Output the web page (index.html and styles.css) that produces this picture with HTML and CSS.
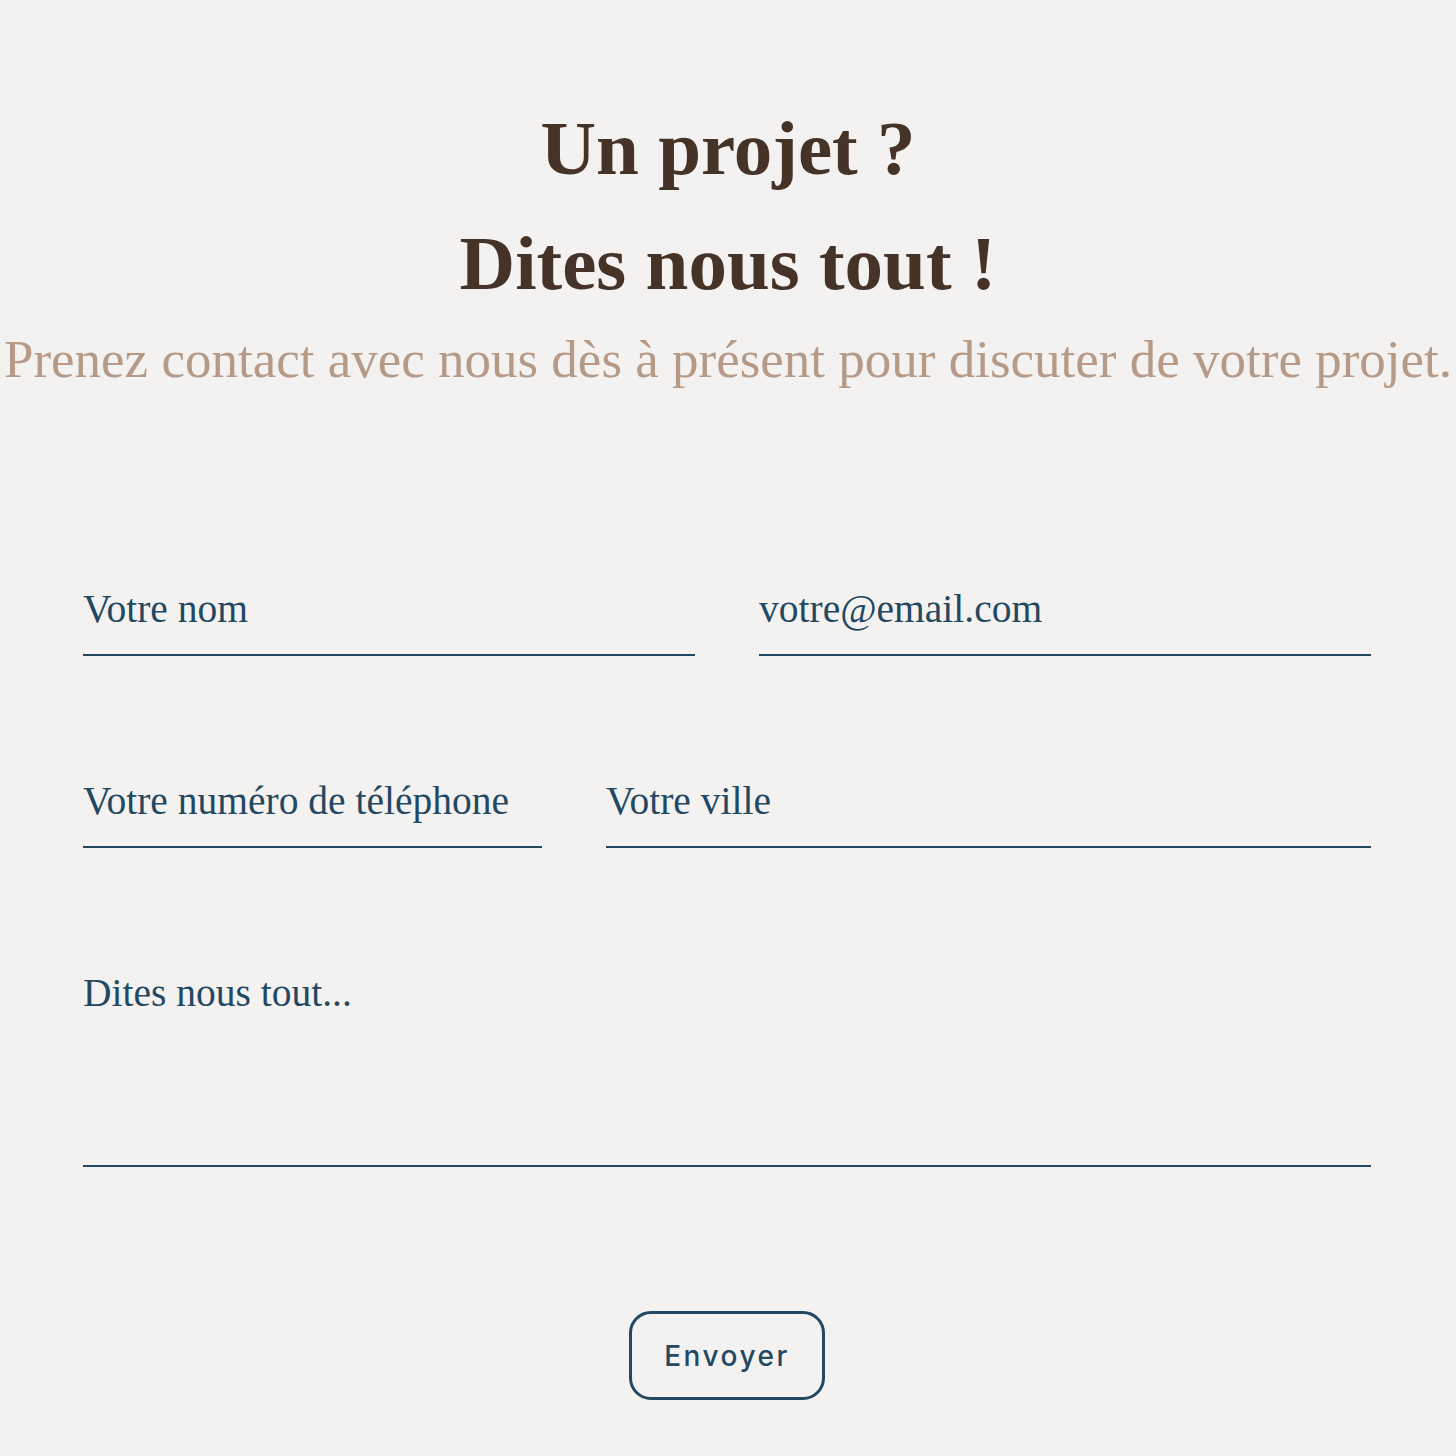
FILE: index.html
```html
<!DOCTYPE html>
<html lang="fr">
<head>
<meta charset="utf-8">
<title>Contact</title>
<link rel="stylesheet" href="styles.css">
</head>
<body>
<main class="contact">
  <h1 class="contact-title">Un projet ?<br>Dites nous tout !</h1>
  <p class="contact-lead">Prenez contact avec nous dès à présent pour discuter de votre projet.</p>
  <form class="contact-form">
    <div class="row row-even">
      <input class="field" type="text" placeholder="Votre nom">
      <input class="field" type="email" placeholder="votre@email.com">
    </div>
    <div class="row row-uneven">
      <input class="field" type="tel" placeholder="Votre numéro de téléphone">
      <input class="field" type="text" placeholder="Votre ville">
    </div>
    <textarea class="field field-area" placeholder="Dites nous tout..."></textarea>
    <div class="actions">
      <button class="send" type="button">Envoyer</button>
    </div>
  </form>
</main>
</body>
</html>
```

FILE: styles.css
```css
html, body {
  margin: 0;
  padding: 0;
  background: #f4f2f0;
}

.contact {
  padding-top: 91px;
  font-family: "Liberation Serif", "DejaVu Serif", serif;
}

.contact-title {
  margin: 0;
  text-align: center;
  font-size: 77px;
  line-height: 115px;
  font-weight: 700;
  color: #463328;
}

.contact-lead {
  margin: 6px 0 0;
  display: flex;
  justify-content: center;
  white-space: nowrap;
  font-size: 53px;
  line-height: 64px;
  color: #b59a87;
}

.contact-form {
  margin: 195px 85px 0 83px;
  display: flex;
  flex-direction: column;
  gap: 122px;
}

.row {
  display: grid;
  column-gap: 64px;
}

.row-even {
  grid-template-columns: 1fr 1fr;
}

.row-uneven {
  grid-template-columns: 3fr 5fr;
}

.field {
  display: block;
  width: 100%;
  box-sizing: border-box;
  margin: 0;
  padding: 0 0 22px 0;
  height: 70px;
  border: 0;
  border-bottom: 2px solid #234862;
  border-radius: 0;
  background: transparent;
  font-family: "Liberation Serif", "DejaVu Serif", serif;
  font-size: 39.5px;
  line-height: 46px;
  color: #234862;
  outline: none;
}

.field::placeholder {
  color: #234862;
  opacity: 1;
}

.field-area {
  height: 197px;
  padding: 0;
  resize: none;
  overflow: hidden;
}

.actions {
  display: flex;
  justify-content: center;
  margin-top: 22px;
}

.send {
  width: 196px;
  height: 89px;
  box-sizing: border-box;
  border: 3px solid #234862;
  border-radius: 22px;
  background: transparent;
  font-family: "Inter", "Lato", sans-serif;
  font-size: 28px;
  font-weight: 500;
  letter-spacing: 2.5px;
  color: #234862;
  cursor: pointer;
}
```
